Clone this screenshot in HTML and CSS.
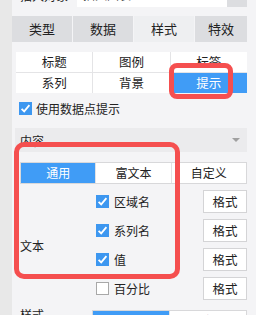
FILE: index.html
```html
<!DOCTYPE html>
<html lang="zh-CN">
<head>
    <meta charset="UTF-8">
    <meta name="viewport" content="width=device-width, initial-scale=1.0">
    <title>提示设置</title>
    <link rel="stylesheet" href="styles.css">
</head>
<body>
    <div class="side"></div>
    <div class="panel">
        <div class="object-row">
            <span class="object-label">插入对象</span>
            <div class="object-input">插入图表</div>
            <div class="object-btn"></div>
        </div>

        <div class="tabs">
            <div class="tab">类型</div>
            <div class="tab">数据</div>
            <div class="tab active">样式</div>
            <div class="tab">特效</div>
        </div>

        <div class="sub-tabs">
            <div class="sub-tab">标题</div>
            <div class="sub-tab">图例</div>
            <div class="sub-tab">标签</div>
            <div class="sub-tab">系列</div>
            <div class="sub-tab">背景</div>
            <div class="sub-tab active">提示</div>
        </div>

        <label class="check-row">
            <span class="check on"></span>
            <span>使用数据点提示</span>
        </label>

        <div class="section-head">
            <span>内容</span>
            <span class="arrow"></span>
        </div>

        <div class="segment">
            <div class="seg active">通用</div>
            <div class="seg">富文本</div>
            <div class="seg">自定义</div>
        </div>

        <div class="field">
            <div class="field-label">文本</div>
            <div class="field-list">
                <div class="item">
                    <span class="check on"></span>
                    <span class="item-name">区域名</span>
                    <button class="fmt">格式</button>
                </div>
                <div class="item">
                    <span class="check on"></span>
                    <span class="item-name">系列名</span>
                    <button class="fmt">格式</button>
                </div>
                <div class="item">
                    <span class="check on"></span>
                    <span class="item-name">值</span>
                    <button class="fmt">格式</button>
                </div>
                <div class="item">
                    <span class="check"></span>
                    <span class="item-name">百分比</span>
                    <button class="fmt">格式</button>
                </div>
            </div>
        </div>

        <div class="style-row">
            <div class="field-label">样式</div>
            <div class="segment small">
                <div class="seg active">默认</div>
                <div class="seg">自定义</div>
            </div>
        </div>
    </div>

    <!-- highlight marks drawn over the panel -->
    <div class="mark mark-tip"></div>
    <div class="mark mark-content"></div>
</body>
</html>
```

FILE: styles.css
```css
body {
    margin: 0;
    width: 256px;
    height: 315px;
    overflow: hidden;
    display: flex;
    font-family: "Noto Sans CJK SC", "Noto Sans", sans-serif;
    font-size: 12px;
    color: #222;
    background-color: #f4f4f6;
    position: relative;
}

.side {
    width: 12px;
    flex-shrink: 0;
    background-color: #e8e8e8;
}

.panel {
    flex: 1;
    padding-right: 9px;
}

.object-row {
    display: flex;
    align-items: center;
    height: 24px;
    margin-top: -17px;
}

.object-label {
    width: 65px;
    padding-left: 8px;
    box-sizing: border-box;
}

.object-input {
    width: 150px;
    height: 24px;
    line-height: 24px;
    background-color: #fff;
    padding-left: 6px;
    box-sizing: border-box;
}

.object-btn {
    flex: 1;
    height: 24px;
    background-color: #dcdde0;
}

.tabs {
    display: flex;
    gap: 1px;
    margin-top: 9px;
}

.tab {
    flex: 1;
    height: 26px;
    line-height: 26px;
    text-align: center;
    font-size: 13px;
    background-color: #dcdde0;
}

.tab:last-child {
    flex: 0 0 52px;
}

.tab.active {
    background-color: #eeeff1;
}

.sub-tabs {
    display: grid;
    grid-template-columns: repeat(3, 1fr);
    gap: 1px;
    margin: 10px 0 0 4px;
    background-color: #e4e4e6;
}

.sub-tab {
    height: 20px;
    line-height: 20px;
    text-align: center;
    font-size: 12.5px;
    background-color: #fff;
}

.sub-tab.active {
    background-color: #409cf6;
    color: #fff;
}

.check-row {
    display: flex;
    align-items: center;
    gap: 4px;
    margin: 9px 0 0 7px;
    height: 13px;
}

.check {
    width: 13px;
    height: 13px;
    flex-shrink: 0;
    box-sizing: border-box;
    border: 1px solid #a8a8a8;
    background-color: #fff;
}

.check.on {
    border: none;
    background: #3d97f0 url("data:image/svg+xml,%3Csvg xmlns='http://www.w3.org/2000/svg' viewBox='0 0 13 13'%3E%3Cpath d='M2.6 6.8l2.6 2.6 5.2-6.2' fill='none' stroke='%23fff' stroke-width='1.8'/%3E%3C/svg%3E") no-repeat;
}

.section-head {
    display: flex;
    justify-content: space-between;
    align-items: center;
    height: 24px;
    margin: 13px 0 0 3px;
    padding: 0 7px 0 5px;
    background-color: #ebebed;
}

.arrow {
    width: 0;
    height: 0;
    border-left: 4px solid transparent;
    border-right: 4px solid transparent;
    border-top: 4px solid #a0a0a0;
}

.segment {
    display: flex;
    margin: 10px 0 0 8px;
    border: 1px solid #d8d8da;
    background-color: #fff;
}

.seg {
    flex: 1;
    height: 20px;
    line-height: 20px;
    text-align: center;
}

.seg + .seg {
    border-left: 1px solid #e2e2e4;
}

.seg.active {
    background-color: #409cf6;
    color: #fff;
}

.field {
    display: flex;
    align-items: center;
    margin: 3px 0 0 8px;
}

.field-label {
    width: 76px;
    flex-shrink: 0;
}

.field-list {
    flex: 1;
}

.item {
    display: flex;
    align-items: center;
    height: 29px;
}

.item-name {
    flex: 1;
    margin-left: 5px;
}

.fmt {
    width: 44px;
    height: 23px;
    padding: 0;
    font-family: inherit;
    font-size: 12.5px;
    color: #222;
    background-color: #fff;
    border: 1px solid #d4d4d6;
}

.style-row {
    display: flex;
    align-items: flex-start;
    margin: 3px 0 0 8px;
}

.style-row .field-label {
    width: 72px;
}

.segment.small {
    flex: 1;
    margin: 4px 0 0 0;
}

.mark {
    position: absolute;
    border: 5px solid #f54f4f;
    border-radius: 8px;
    box-sizing: border-box;
}

.mark-tip {
    left: 169px;
    top: 63px;
    width: 64px;
    height: 36px;
}

.mark-content {
    left: 14px;
    top: 142px;
    width: 166px;
    height: 137px;
    border-radius: 10px;
}
```
